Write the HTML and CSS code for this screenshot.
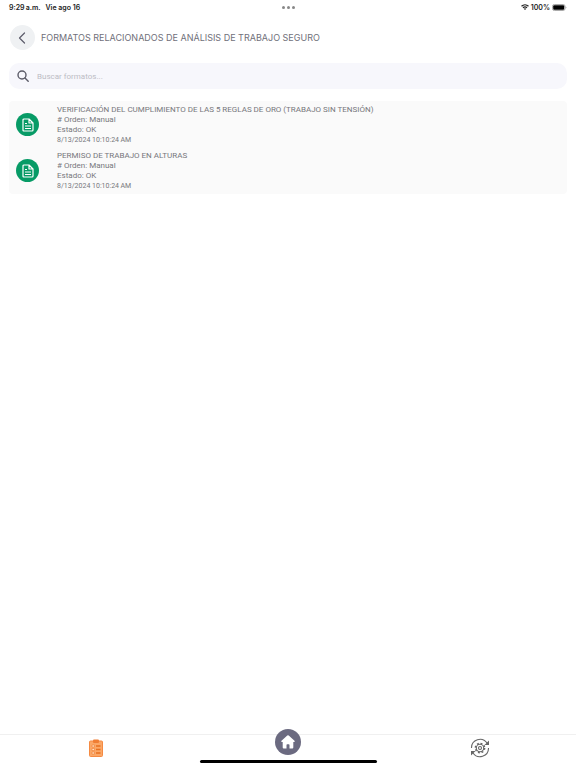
FILE: index.html
```html
<!DOCTYPE html>
<html lang="es">
    <head>
        <meta charset="UTF-8" />
        <meta name="viewport" content="width=device-width, initial-scale=1.0" />
        <title>Formatos relacionados</title>
        <link rel="stylesheet" href="styles.css">
    </head>
    <body>
        <div class="status">
            <div class="status-left"><span>9:29&thinsp;a.m.</span><span>Vie ago 16</span></div>
            <div class="dots"><i></i><i></i><i></i></div>
            <div class="status-right">
                <svg width="8" height="6" viewBox="0 0 16 12" fill="none" stroke="#222" stroke-width="2.4">
                    <path d="M1 4.500C5 .5 11 .5 15 4.500M4 7.500c2.300-2.200 5.700-2.200 8 0" />
                    <path d="M8 12L5.500 9.500q2.500-2 5 0z" fill="#222" stroke="none" />
                </svg>
                <span>100%</span>
                <svg width="15" height="7" viewBox="0 0 15 7">
                    <rect x=".5" y=".5" width="12.500" height="6" rx="1.800" fill="none" stroke="#aaa" />
                    <rect x="1.200" y="1.200" width="11" height="4.600" rx="1" fill="#000" />
                    <path d="M13.700 2.400q1.400 1.100 0 2.200z" fill="#888" />
                </svg>
            </div>
        </div>

        <header class="header">
            <button class="back" aria-label="Volver">
                <svg width="8" height="12" viewBox="0 0 8 12" fill="none" stroke="#5c5c6b" stroke-width="1.200" stroke-linecap="round" stroke-linejoin="round">
                    <path d="M6.500 1L1.500 6l5 5" />
                </svg>
            </button>
            <h1>FORMATOS RELACIONADOS DE ANÁLISIS DE TRABAJO SEGURO</h1>
        </header>

        <main>
            <label class="search">
                <svg width="12" height="12" viewBox="0 0 12 12" fill="none" stroke="#5c5c68" stroke-width="1.400" stroke-linecap="round">
                    <circle cx="5" cy="5" r="4" />
                    <path d="M8 8l3.200 3.200" />
                </svg>
                <input type="text" placeholder="Buscar formatos..." aria-label="Buscar formatos" />
            </label>

            <ul class="list">
                <li class="item">
                    <span class="item-icon">
                        <svg width="12" height="14" viewBox="0 0 12 14" fill="none" stroke="#fff" stroke-width="1.200" stroke-linejoin="round">
                            <path d="M1 2q0-1 1-1h5l4 4v7q0 1-1 1H2q-1 0-1-1zM7 1v4h4M3 5.500h2M3 8h6M3 10.500h6" />
                        </svg>
                    </span>
                    <div>
                        <h2>VERIFICACIÓN DEL CUMPLIMIENTO DE LAS 5 REGLAS DE ORO (TRABAJO SIN TENSIÓN)</h2>
                        <p># Orden: Manual</p>
                        <p>Estado: OK</p>
                        <p class="date">8/13/2024 10:10:24&thinsp;AM</p>
                    </div>
                </li>
                <li class="item">
                    <span class="item-icon">
                        <svg width="12" height="14" viewBox="0 0 12 14" fill="none" stroke="#fff" stroke-width="1.200" stroke-linejoin="round">
                            <path d="M1 2q0-1 1-1h5l4 4v7q0 1-1 1H2q-1 0-1-1zM7 1v4h4M3 5.500h2M3 8h6M3 10.500h6" />
                        </svg>
                    </span>
                    <div>
                        <h2>PERMISO DE TRABAJO EN ALTURAS</h2>
                        <p># Orden: Manual</p>
                        <p>Estado: OK</p>
                        <p class="date">8/13/2024 10:10:24&thinsp;AM</p>
                    </div>
                </li>
            </ul>
        </main>

        <nav class="tabs">
            <button class="tab" aria-label="Formatos">
                <svg width="16" height="18" viewBox="0 0 16 18">
                    <rect x="1.500" y="2" width="13" height="15.500" rx="1" fill="#fba766" stroke="#f58a42" />
                    <rect x="5" y=".5" width="6" height="3.500" rx="1" fill="#ef7d33" />
                    <path d="M4 6h2.500v2H4zM4 9.500h2.500v2H4zM4 13h2.500v2H4z" fill="#ffe0c4" stroke="#ee7c32" stroke-width=".6" />
                    <path d="M8 7h4.500M8 10.500h4.500M8 14h4.500" stroke="#e8701f" stroke-width="1.300" />
                </svg>
            </button>
            <button class="tab home" aria-label="Inicio">
                <svg width="14" height="14" viewBox="0 0 14 14" fill="#fff">
                    <path d="M6.300.6q.7-.6 1.400 0l5.800 5.200q.6.800-.3 1.200h-.9v5.500q0 1-1 1H8.500V10q0-.7-.7-.7H6.200q-.7 0-.7.700v3.500H2.700q-1 0-1-1V7H.8q-.9-.4-.3-1.200z" />
                </svg>
            </button>
            <button class="tab" aria-label="Sincronizar">
                <svg width="20" height="20" viewBox="0 0 20 20" fill="none" stroke="#666" stroke-width="1.100">
                    <path d="M1.500 10A8.500 8.500 0 0 1 17 5M18.500 10A8.500 8.500 0 0 1 3 15" />
                    <path d="M19 2.500V7h-4.500zM1 17.500V13h4.500z" fill="#666" stroke="none" />
                    <circle cx="10" cy="10" r="3.700" />
                    <circle cx="10" cy="10" r="1.500" />
                    <circle cx="10" cy="10" r="4.700" stroke-width="1.400" stroke-dasharray="1.900 1.791" />
                </svg>
            </button>
            <span class="home-bar"></span>
        </nav>
    </body>
</html>
```
FILE: styles.css
```css
* {
    padding: 0;
    margin: 0;
    box-sizing: border-box;
}

body {
    min-height: 100vh;
    display: flex;
    flex-direction: column;
    background-color: #fff;
    color: #77777c;
    font-family: Roboto, "Liberation Sans", sans-serif;
    font-size: 8px;
}

svg {
    display: block;
}

button {
    border: none;
    background: none;
}

.status {
    display: grid;
    grid-template-columns: 1fr auto 1fr;
    align-items: center;
    height: 14px;
    padding: 0 9px;
    color: #222;
    font-family: Inter, "Liberation Sans", sans-serif;
    font-size: 7px;
    font-weight: 600;
}

.status-left,
.status-right {
    display: flex;
    align-items: center;
    gap: 5px;
}

.status-right {
    justify-content: flex-end;
    gap: 2px;
}

.dots {
    display: flex;
    gap: 2px;
}

.dots i {
    width: 3px;
    height: 3px;
    border-radius: 50%;
    background-color: #888;
}

.header {
    display: flex;
    align-items: center;
    gap: 6px;
    padding: 11px 10px 13px;
}

.back {
    display: flex;
    align-items: center;
    justify-content: center;
    width: 25px;
    height: 25px;
    padding-right: 2px;
    border-radius: 50%;
    background-color: #eff1f3;
}

h1 {
    color: #70707a;
    font-family: Inter, "Liberation Sans", sans-serif;
    font-size: 9px;
    font-weight: 400;
}

main {
    flex: 1;
    padding: 0 9px;
}

.search {
    display: flex;
    align-items: center;
    gap: 8px;
    height: 26px;
    padding: 0 8px;
    border-radius: 10px;
    background-color: #f7f7fc;
}

.search input {
    flex: 1;
    border: none;
    outline: none;
    background: none;
    color: #5c5c68;
    font: inherit;
}

.search input::placeholder {
    color: #bcbcc4;
}

.list {
    margin-top: 12px;
    padding-bottom: 1px;
    border-radius: 4px;
    background-color: #fafafa;
    list-style: none;
}

.item {
    display: flex;
    align-items: center;
    gap: 18px;
    padding: 3px 7px 2px;
}

.item-icon {
    display: flex;
    align-items: center;
    justify-content: center;
    width: 23px;
    height: 23px;
    border-radius: 50%;
    background-color: #079b66;
}

.item h2,
.item p {
    font-size: 8px;
    font-weight: 400;
    line-height: 10px;
}

.item h2 {
    line-height: 11px;
}

.item .date {
    font-size: 7px;
}

.tabs {
    position: relative;
    display: grid;
    grid-template-columns: repeat(3, 1fr);
    justify-items: center;
    height: 34px;
    border-top: 1px solid #f0f0f0;
}

.tab {
    display: flex;
    align-items: center;
    justify-content: center;
    width: 26px;
    height: 26px;
}

.home {
    margin-top: -6px;
    border-radius: 50%;
    background-color: #6b6a80;
}

.home-bar {
    position: absolute;
    bottom: 5px;
    left: 50%;
    width: 177px;
    height: 3px;
    margin-left: -88px;
    border-radius: 2px;
    background-color: #000;
}
```
